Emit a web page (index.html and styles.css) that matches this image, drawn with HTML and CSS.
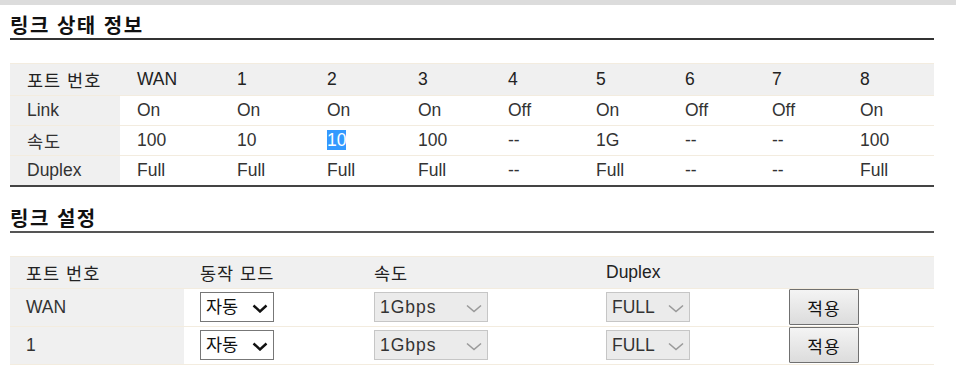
FILE: index.html
```html
<!DOCTYPE html>
<html lang="ko">
  <head>
    <meta charset="UTF-8" />
    <title>링크 상태 정보</title>
    <link rel="stylesheet" href="styles.css">
  </head>
  <body>
    <div class="topbar"></div>

    <div class="page">
      <h2 class="section-title">링크 상태 정보</h2>
      <table class="status">
        <colgroup>
          <col class="c-label"><col class="c-wan">
          <col class="c90"><col class="c91"><col class="c90"><col class="c88">
          <col class="c89"><col class="c87"><col class="c88"><col>
        </colgroup>
        <tr class="head">
          <td class="label ko">포트 번호</td><td>WAN</td><td>1</td><td>2</td><td>3</td><td>4</td><td>5</td><td>6</td><td>7</td><td>8</td>
        </tr>
        <tr>
          <td class="label">Link</td><td>On</td><td>On</td><td>On</td><td>On</td><td>Off</td><td>On</td><td>Off</td><td>Off</td><td>On</td>
        </tr>
        <tr>
          <td class="label ko">속도</td><td>100</td><td>10</td><td><span class="picked">10</span></td><td>100</td><td>--</td><td>1G</td><td>--</td><td>--</td><td>100</td>
        </tr>
        <tr class="last">
          <td class="label">Duplex</td><td>Full</td><td>Full</td><td>Full</td><td>Full</td><td>--</td><td>Full</td><td>--</td><td>--</td><td>Full</td>
        </tr>
      </table>

      <h2 class="section-title second">링크 설정</h2>
      <table class="setup">
        <colgroup>
          <col class="s1"><col class="s2"><col class="s3"><col class="s4"><col>
        </colgroup>
        <tr class="head">
          <td class="label ko">포트 번호</td><td class="ko">동작 모드</td><td class="ko">속도</td><td>Duplex</td><td></td>
        </tr>
        <tr>
          <td class="label">WAN</td>
          <td>
            <span class="sel mode">
              <select><option>자동</option></select>
              <svg width="16" height="9" viewBox="0 0 16 9"><path d="M1.5 1.5 L8 7.5 L14.5 1.5" fill="none" stroke="#111" stroke-width="2.4"/></svg>
            </span>
          </td>
          <td>
            <span class="sel speed off">
              <select disabled><option>1Gbps</option></select>
              <svg width="16" height="9" viewBox="0 0 16 9"><path d="M1 1.5 L8 7.5 L15 1.5" fill="none" stroke="#9a9a9a" stroke-width="1.6"/></svg>
            </span>
          </td>
          <td>
            <span class="sel duplex off">
              <select disabled><option>FULL</option></select>
              <svg width="16" height="9" viewBox="0 0 16 9"><path d="M1 1.5 L8 7.5 L15 1.5" fill="none" stroke="#9a9a9a" stroke-width="1.6"/></svg>
            </span>
          </td>
          <td><button class="apply">적용</button></td>
        </tr>
        <tr class="cut">
          <td class="label">1</td>
          <td>
            <span class="sel mode">
              <select><option>자동</option></select>
              <svg width="16" height="9" viewBox="0 0 16 9"><path d="M1.5 1.5 L8 7.5 L14.5 1.5" fill="none" stroke="#111" stroke-width="2.4"/></svg>
            </span>
          </td>
          <td>
            <span class="sel speed off">
              <select disabled><option>1Gbps</option></select>
              <svg width="16" height="9" viewBox="0 0 16 9"><path d="M1 1.5 L8 7.5 L15 1.5" fill="none" stroke="#9a9a9a" stroke-width="1.6"/></svg>
            </span>
          </td>
          <td>
            <span class="sel duplex off">
              <select disabled><option>FULL</option></select>
              <svg width="16" height="9" viewBox="0 0 16 9"><path d="M1 1.5 L8 7.5 L15 1.5" fill="none" stroke="#9a9a9a" stroke-width="1.6"/></svg>
            </span>
          </td>
          <td><button class="apply">적용</button></td>
        </tr>
      </table>
    </div>
  </body>
</html>
```

FILE: styles.css
```css
body {
  margin: 0;
  font-family: "Liberation Sans", "Noto Sans CJK KR", sans-serif;
  font-size: 17.5px;
  color: #333;
  background: #fff;
  overflow: hidden;
}

.topbar {
  height: 5px;
  background-color: #dcdcdc;
}

.page {
  width: 924px;
  padding-left: 10px;
}

.section-title {
  margin: 7px 0 0 0;
  font-family: "Noto Sans CJK KR", sans-serif;
  font-size: 20px;
  font-weight: bold;
  line-height: 26px;
  height: 26px;
  letter-spacing: 1.5px;
  color: #111;
  border-bottom: 2px solid #333;
}

.section-title.second {
  margin-top: 18px;
  border-bottom-color: #555;
}

table {
  width: 924px;
  table-layout: fixed;
  border-collapse: collapse;
  margin-top: 23px;
}

td {
  padding: 0 0 0 17px;
  text-align: left;
  vertical-align: middle;
  white-space: nowrap;
  border-top: 1px solid #f3ecdf;
}

.ko {
  letter-spacing: 1px;
}

tr.head td {
  background-color: #f0f0f0;
  color: #222;
}

td.label {
  background-color: #f0f0f0;
}

/* status table */
.status tr {
  height: 30px;
}

.status tr.head {
  height: 32px;
}

.status tr.last td {
  border-bottom: 2px solid #444;
}

.c-label { width: 110px; }
.c-wan { width: 100px; }
.c90 { width: 90px; }
.c91 { width: 91px; }
.c88 { width: 88px; }
.c89 { width: 89px; }
.c87 { width: 87px; }

.picked {
  background-color: #3399ff;
  color: #fff;
}

/* setup table */
.setup tr {
  height: 38px;
}

.setup tr.head {
  height: 32px;
}

.setup tr.cut td {
  border-bottom: 1px solid #f3ecdf;
}

.setup td {
  padding-left: 16px;
}

.s1 { width: 174px; }
.s2 { width: 174px; }
.s3 { width: 232px; }
.s4 { width: 183px; }

.sel {
  display: inline-block;
  position: relative;
  height: 30px;
  vertical-align: middle;
}

.sel select {
  appearance: none;
  -webkit-appearance: none;
  box-sizing: border-box;
  width: 100%;
  height: 100%;
  margin: 0;
  padding: 0 0 0 5px;
  font-family: "Liberation Sans", "Noto Sans CJK KR", sans-serif;
  font-size: 17.5px;
  color: #111;
  background-color: #fff;
  border: 1px solid #777;
  border-radius: 0;
  opacity: 1;
}

.sel svg {
  position: absolute;
  right: 6px;
  top: 12px;
  pointer-events: none;
}

.sel.mode { width: 74px; }
.sel.speed { width: 114px; }
.sel.duplex { width: 84px; }

.sel.off select {
  background-color: #ebebeb;
  border-color: #c6c6c6;
  color: #333;
}

.sel.speed select {
  letter-spacing: 1px;
}

.apply {
  width: 70px;
  height: 36px;
  margin: 0;
  padding: 0;
  vertical-align: middle;
  font-family: "Noto Sans CJK KR", sans-serif;
  font-size: 17px;
  letter-spacing: 1px;
  color: #111;
  background: linear-gradient(#f4f4f4, #dcdcdc);
  border: 1px solid #707070;
  border-radius: 1px;
}
```
